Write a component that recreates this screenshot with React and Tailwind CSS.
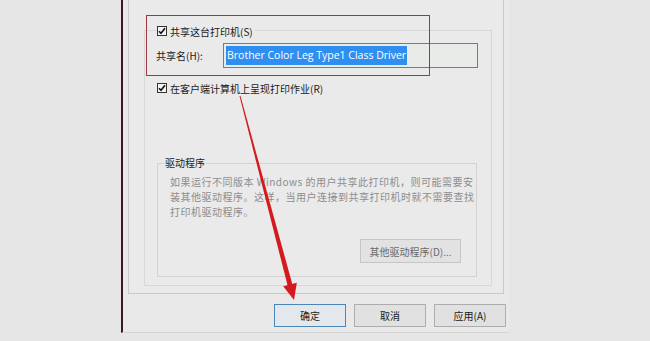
import React from 'react';

function Check() {
    return (
        <span className="inline-flex w-[10px] h-[10px] border border-[#333] bg-[#f4f4f4] items-center justify-center shrink-0">
            <svg width="8" height="8" viewBox="0 0 8 8">
                <path d="M1 4.2 L3 6.3 L7 1.2" fill="none" stroke="#111" strokeWidth="1.6" />
            </svg>
        </span>
    );
}

function Arrow() {
    return (
        <svg className="absolute left-0 top-0 pointer-events-none" width="650" height="341">
            <polygon points="240.5,95.9 239.5,96.1 287.6,285.6 292.4,284.4" fill="#d4191f" />
            <polygon points="294,300 283.2,286.3 296.8,282.7" fill="#d4191f" />
        </svg>
    );
}

export default function App() {
    return (
        <div className="relative w-[650px] h-[341px] bg-[#e6e6e6] overflow-hidden flex font-['Noto_Sans_CJK_SC',sans-serif] text-[10px] text-[#1a1a1a]">
            <div className="ml-[121px] w-[388px] h-[333px] border-l-2 border-b border-l-[#3a1c20] border-b-[#d6d6d6] bg-[#e9e9e9] pl-[5px] flex flex-col">
                <div className="w-[376px] h-[294px] border-x border-b border-[#c9c9c9] bg-[#eaeaea] pt-[30px] pl-[15px]">
                    <div className="w-[348px] h-[256px] border border-[#d8d8d8] relative">
                        <div className="flex items-center gap-[3px] -mt-[7px] ml-[12px] w-fit bg-[#eaeaea] pr-[2px] h-[14px]">
                            <Check />
                            <span>共享这台打印机(S)</span>
                        </div>
                        <div className="flex items-center mt-[5px] ml-[11px]">
                            <span className="w-[67px]">共享名(H):</span>
                            <div className="w-[255px] h-[25px] border border-[#6f7f8a] bg-[#e8ebe8] flex items-center pl-[2px]">
                                <span className="bg-[#2f8ff0] text-white font-['Open_Sans',sans-serif] text-[10.5px] leading-[19px] px-[1px]">Brother Color Leg Type1 Class Driver</span>
                            </div>
                        </div>
                        <div className="flex items-center gap-[3px] mt-[13px] ml-[12px] h-[14px]">
                            <Check />
                            <span>在客户端计算机上呈现打印作业(R)</span>
                        </div>
                        <div className="mt-[68px] ml-[12px] w-[320px] h-[114px] border border-[#d2d2d2]">
                            <div className="-mt-[8px] ml-[6px] w-fit bg-[#eaeaea] px-[1px] leading-[14px] text-[#222]">驱动程序</div>
                            <div className="ml-[12px] mt-[4px] leading-[15px] text-[#8d8d8d] tracking-[0.5px] whitespace-nowrap">
                                <div>如果运行不同版本 Windows 的用户共享此打印机，则可能需要安</div>
                                <div>装其他驱动程序。这样，当用户连接到共享打印机时就不需要查找</div>
                                <div>打印机驱动程序。</div>
                            </div>
                            <div className="flex justify-end pr-[15px] mt-[20px]">
                                <div className="w-[101px] h-[24px] border border-[#c6c6c6] bg-[#e2e2e2] flex items-center justify-center text-[#6a6a6a]">其他驱动程序(D)...</div>
                            </div>
                        </div>
                    </div>
                </div>
                <div className="flex justify-end gap-[8px] pr-[3px] mt-[10px]">
                    <div className="w-[72px] h-[23px] border border-[#4a86b8] bg-[#e4e8ec] flex items-center justify-center">确定</div>
                    <div className="w-[72px] h-[23px] border border-[#adadad] bg-[#e1e1e1] flex items-center justify-center">取消</div>
                    <div className="w-[72px] h-[23px] border border-[#adadad] bg-[#e1e1e1] flex items-center justify-center">应用(A)</div>
                </div>
            </div>
            <div className="absolute left-[146px] top-[15px] w-[284px] h-[61px] border-[1.5px] border-[#9a3a40] pointer-events-none" />
            <Arrow />
        </div>
    );
}
